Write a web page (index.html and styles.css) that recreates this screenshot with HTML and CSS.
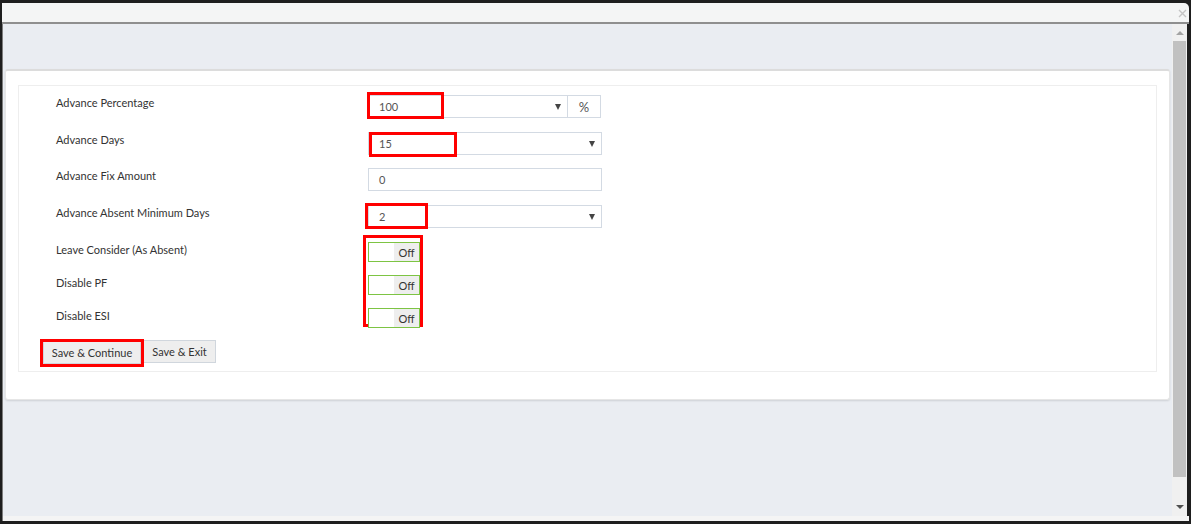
FILE: index.html
```html
<!DOCTYPE html>
<html>
<head>
<meta charset="utf-8">
<link rel="stylesheet" href="styles.css">
</head>
<body>
<div class="window">
  <div class="titlebar">
    <svg class="close" width="9" height="9" viewBox="0 0 9 9"><path d="M1 1L8 8M8 1L1 8" stroke="#c4c4c4" stroke-width="1.4" fill="none"/></svg>
  </div>
  <div class="wbody">
    <div class="frame">
      <div class="card">
        <div class="panel">
          <div class="row">
            <div class="label">Advance Percentage</div>
            <div class="field">
              <div class="group">
                <div class="select w200"><span class="val">100</span><span class="caret"></span></div>
                <div class="addon">%</div>
              </div>
              <div class="mark m1"></div>
            </div>
          </div>
          <div class="row r36">
            <div class="label">Advance Days</div>
            <div class="field">
              <div class="select"><span class="val">15</span><span class="caret"></span></div>
              <div class="mark m2"></div>
            </div>
          </div>
          <div class="row">
            <div class="label">Advance Fix Amount</div>
            <div class="field">
              <div class="input"><span class="val">0</span></div>
            </div>
          </div>
          <div class="row">
            <div class="label">Advance Absent Minimum Days</div>
            <div class="field">
              <div class="select"><span class="val">2</span><span class="caret"></span></div>
              <div class="mark m4"></div>
            </div>
          </div>
          <div class="row sm">
            <div class="label">Leave Consider (As Absent)</div>
            <div class="field">
              <div class="toggle"><span class="on"></span><span class="off">Off</span></div>
              <div class="mark m5"></div>
            </div>
          </div>
          <div class="row sm">
            <div class="label">Disable PF</div>
            <div class="field">
              <div class="toggle"><span class="on"></span><span class="off">Off</span></div>
            </div>
          </div>
          <div class="row sm">
            <div class="label">Disable ESI</div>
            <div class="field">
              <div class="toggle"><span class="on"></span><span class="off">Off</span></div>
            </div>
          </div>
          <div class="actions">
            <div class="btnwrap">
              <button class="btn w98">Save &amp; Continue</button>
              <div class="mark m6"></div>
            </div>
            <button class="btn w73">Save &amp; Exit</button>
          </div>
        </div>
      </div>
    </div>
    <div class="scrollbar">
      <div class="sb-btn"><span class="tri up"></span></div>
      <div class="sb-track"><div class="sb-thumb"></div></div>
      <div class="sb-btn down"><span class="tri dn"></span></div>
    </div>
  </div>
  <div class="bottomstrip"></div>
</div>
</body>
</html>
```

FILE: styles.css
```css
* { box-sizing: border-box; }
html, body { margin: 0; padding: 0; }
body {
  background: #1e1e1e;
  width: 1191px;
  height: 524px;
  overflow: hidden;
  font-family: Lato, "Liberation Sans", sans-serif;
  font-size: 11px;
  color: #333;
}
.window {
  margin: 3px 2px 0 2px;
  width: 1187px;
  height: 518px;
  display: flex;
  flex-direction: column;
  background: #f4f5f5;
  border-top-right-radius: 5px;
}
.titlebar {
  height: 21px;
  flex: none;
  border-bottom: 2px solid #8f8f8f;
  display: flex;
  justify-content: flex-end;
  align-items: flex-start;
  padding: 6px 2px 0 0;
}
.wbody {
  flex: 1;
  display: flex;
  border-left: 1px solid #7d7d7d;
  border-right: 2px solid #1e1e1e;
  min-height: 0;
}
.frame {
  flex: 1;
  background: #eaedf2;
  padding: 45px 2px 0 2px;
}
.card {
  background: #fff;
  border: 1px solid #e6e6e6;
  border-top: 2px solid #dcdcdc;
  border-radius: 3px;
  box-shadow: 0 1px 2px rgba(0,0,0,0.12);
  padding: 14px 12px 27px 12px;
}
.panel {
  border: 1px solid #eeeeee;
  padding: 9px 0 7px 24px;
}
.row {
  display: flex;
  align-items: flex-start;
  height: 37px;
}
.row.r36 { height: 36px; }
.row.sm { height: 33px; }
.label {
  width: 325px;
  flex: none;
  padding-left: 13px;
  line-height: 16px;
  color: #333;
}
.field { position: relative; width: 234px; }
.group { display: flex; }
.select, .input {
  height: 23px;
  border: 1px solid #d3dae3;
  background: #fff;
  display: flex;
  align-items: center;
  justify-content: space-between;
  padding: 0 6px 0 10px;
  color: #555;
  font-size: 11px;
}
.select.w200 { width: 200px; }
.addon {
  width: 33px;
  height: 23px;
  border: 1px solid #d3dae3;
  border-left: none;
  display: flex;
  align-items: center;
  justify-content: center;
  color: #555;
  font-size: 13px;
}
.caret {
  width: 0; height: 0;
  border-left: 3px solid transparent;
  border-right: 3px solid transparent;
  border-top: 6px solid #444;
}
.toggle {
  width: 52px;
  height: 20px;
  border: 1px solid #7dc443;
  display: flex;
}
.toggle .on { width: 25px; background: #fff; }
.toggle .off {
  flex: 1;
  background: #eeeeee;
  display: flex;
  align-items: center;
  justify-content: center;
  color: #333;
  font-size: 11px;
}
.actions { display: flex; align-items: flex-start; gap: 2px; }
.btnwrap { position: relative; }
.btn {
  height: 23px;
  background: #eeeeee;
  border: 1px solid #d0d6dd;
  font-family: Lato, "Liberation Sans", sans-serif;
  font-size: 11px;
  color: #333;
  padding: 0;
  margin: 0;
}
.btn.w98 { width: 98px; }
.btn.w73 { width: 73px; margin-top: -1px; }
.mark {
  position: absolute;
  border: 3px solid #ff0000;
}
.m1 { left: -1px; top: -3px; width: 77px; height: 27px; }
.m2 { left: 1px; top: 0; width: 88px; height: 25px; }
.m4 { left: -3px; top: -2px; width: 63px; height: 26px; }
.m5 { left: -5px; top: -7px; width: 60px; height: 92px; }
.m6 { left: -3px; top: -2px; width: 104px; height: 28px; }
.scrollbar {
  width: 15px;
  background: #f0f0f0;
  display: flex;
  flex-direction: column;
}
.sb-btn {
  height: 17px;
  display: flex;
  align-items: center;
  justify-content: center;
}
.sb-btn.down { height: 18px; }
.tri { width: 0; height: 0; border-left: 4px solid transparent; border-right: 4px solid transparent; }
.tri.up { border-bottom: 4px solid #a3a3a3; }
.tri.dn { border-top: 4px solid #505050; }
.sb-track { flex: 1; padding: 0 1px; }
.sb-thumb { height: 436px; background: #c1c1c1; }
.bottomstrip { height: 5px; flex: none; background: #f4f4f4; border-left: 1px solid #7d7d7d; }
```
